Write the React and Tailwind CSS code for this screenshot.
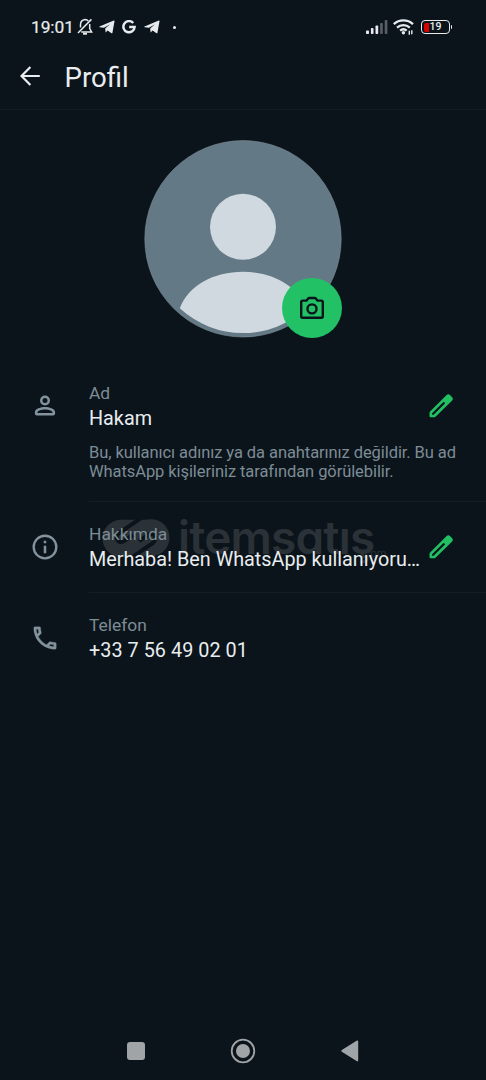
import * as React from "react";

const Svg = ({ children, className = "", ...props }) => (
  <svg viewBox="0 0 24 24" fill="currentColor" className={`block shrink-0 ${className}`} {...props}>
    {children}
  </svg>
);

const BellOffIcon = () => (
  <svg viewBox="0 0 16 18" fill="none" stroke="currentColor" strokeWidth="1.5" className="block h-[18px] w-4">
    <path d="M3.5 9.5V6.8C3.5 3.9 5.2 2 8 1.6c1.5 0 2.5.5 3.3 1.3M12.7 6v4.6l1.9 3.3H4.2" />
    <path d="M1 15 14.4 1.4" />
    <path d="M6 15.8h4" strokeWidth="1.8" />
  </svg>
);

const TelegramIcon = () => (
  <svg viewBox="0 0 16 14" fill="currentColor" className="block h-[14px] w-4">
    <path d="M.5 6.6 14.8.6c.5-.2.8.1.7.6l-2.1 11.7c-.1.5-.5.6-.9.3L8.6 10.5 6.6 12.4 6.2 8.4 11 4.2 5 7.8.6 7.2C.1 7.1.1 6.8.5 6.6Z" />
  </svg>
);

const GoogleIcon = () => (
  <svg viewBox="0 0 14 14" fill="none" stroke="currentColor" strokeWidth="2.5" className="block size-[14px]">
    <path d="M11.2 3A5.6 5.6 0 1 0 12.6 7H7.2" />
  </svg>
);

const SignalIcon = () => (
  <svg viewBox="0 0 22 14" fill="currentColor" className="block h-[14px] w-[22px]">
    <rect x="0" y="10.5" width="3" height="3.5" rx=".8" />
    <rect x="4.9" y="8" width="2.6" height="6" rx=".8" />
    <rect x="9.5" y="5.5" width="2.7" height="8.5" rx=".8" />
    <rect x="14.1" y="3" width="2.7" height="11" rx=".8" opacity=".35" />
    <rect x="18.7" y="0" width="2.7" height="14" rx=".8" opacity=".35" />
  </svg>
);

const WifiIcon = () => (
  <svg viewBox="0 0 21 16" fill="none" stroke="currentColor" strokeWidth="2.3" className="block h-4 w-[21px]">
    <path d="M.8 5.2C6.2.2 14.6.2 20 5.2M4 8.6c3.7-3.3 9.1-3.3 12.8 0M7.1 11.7c2-1.7 4.6-1.7 6.6 0" />
    <circle cx="10.4" cy="13.8" r="1.7" fill="currentColor" stroke="none" />
    <path d="M16.3 11.8v4M18.8 11.3v4" strokeWidth="1.4" />
  </svg>
);

const PersonIcon = () => (
  <Svg className="size-[30px]">
    <path d="M12 3.6a4 4 0 1 0 0 8 4 4 0 0 0 0-8Zm0 2a2 2 0 1 1 0 4 2 2 0 0 1 0-4ZM12 12.7c-3.2 0-8.1 1.2-8.1 4.2V18c0 .9.6 1.5 1.5 1.5h13.2c.9 0 1.5-.6 1.5-1.5v-1.1c0-3-4.9-4.2-8.100-4.200Zm0 2c2.600 0 6 1 6 2.300v.5H6V17c0-1.300 3.400-2.300 6-2.300Z" />
  </Svg>
);

const InfoIcon = () => (
  <Svg className="size-[30px]">
    <path d="M11 7h2v2h-2zm0 4h2v6h-2zm1-9a10 10 0 1 0 0 20 10 10 0 0 0 0-20Zm0 18.1a8.1 8.1 0 1 1 0-16.2 8.1 8.1 0 0 1 0 16.2Z" />
  </Svg>
);

const PhoneIcon = () => (
  <Svg className="size-[30px]" stroke="currentColor" strokeWidth=".2">
    <path d="M6.54 5c.06.89.21 1.76.45 2.59l-1.2 1.2c-.41-1.2-.67-2.47-.76-3.79h1.51m9.86 12.02c.85.24 1.72.39 2.6.45v1.49c-1.32-.09-2.59-.35-3.8-.75l1.2-1.19M7.5 3H4c-.55 0-1 .45-1 1 0 9.39 7.61 17 17 17 .55 0 1-.45 1-1v-3.490c0-.55-.45-1-1-1-1.240 0-2.450-.2-3.570-.57a1.020 1.020 0 0 0-1.020.24l-2.200 2.200a15.150 15.150 0 0 1-6.590-6.590l2.200-2.200c.28-.28.360-.67.250-1.020A11.360 11.360 0 0 1 8.500 4c0-.55-.45-1-1-1Z" />
  </Svg>
);

const PencilIcon = () => (
  <svg viewBox="0 0 24 24" fill="currentColor" className="block size-6 text-[#21c063]">
    <path
      fillRule="evenodd"
      d="M17.4 1.2a2.7 2.7 0 0 1 3.8 0l1.7 1.7a2.7 2.7 0 0 1 0 3.8L6.5 22.7c-.4.4-.8.6-1.4.6H1.9c-.8 0-1.4-.6-1.4-1.4v-3.1c0-.5.2-1 .6-1.4L17.4 1.2ZM3.1 19.300v1.500h1.500L16.200 9.200l-1.500-1.500L3.100 19.300Z"
    />
  </svg>
);

const CameraIcon = () => (
  <svg viewBox="0 0 26 24" fill="none" stroke="currentColor" strokeWidth="2.4" strokeLinejoin="round" className="block h-6 w-[26px]">
    <path d="M3.6 4.6h4L9.2 2.5c.3-.4.6-.5 1-.5h5.6c.4 0 .7.1 1 .5l1.6 2.1h4c.9 0 1.4.5 1.4 1.4v14.3c0 .9-.5 1.4-1.4 1.4H3.6c-.9 0-1.4-.5-1.4-1.4V6c0-.9.5-1.4 1.4-1.4Z" />
    <circle cx="13" cy="12.9" r="4.5" />
  </svg>
);

const StatusBar = () => (
  <div className="flex h-[52px] shrink-0 items-center justify-between pr-[34px] pl-[31px] text-[#e8ebed]">
    <div className="flex items-center pt-0.5">
      <span className="w-[46px] text-[17.4px] leading-5 tracking-[-0.1px] [-webkit-text-stroke:0.2px]">19:01</span>
      <BellOffIcon />
      <span className="ml-[6px]"><TelegramIcon /></span>
      <span className="ml-[7px]"><GoogleIcon /></span>
      <span className="ml-2"><TelegramIcon /></span>
      <span className="ml-[13px] size-[3px] rounded-full bg-current" />
    </div>
    <div className="flex items-center pt-0.5">
      <SignalIcon />
      <span className="ml-[5px]"><WifiIcon /></span>
      <div className="ml-[7px] flex h-[14px] w-[29px] items-center rounded-[4px] border-[1.5px] border-current pl-0.5">
        <span className="h-[9px] w-[5px] rounded-l-[2px] bg-[#d80000]" />
        <span className="ml-px text-[10.5px] leading-none font-medium">19</span>
      </div>
      <span className="ml-px h-1 w-[1.5px] rounded-r bg-current" />
    </div>
  </div>
);

const Header = () => (
  <header className="flex h-[58px] shrink-0 items-center border-b border-[#111c23] pb-[6px] pl-5 text-[#e9edef]">
    <svg viewBox="0 0 20 20" fill="none" stroke="currentColor" strokeWidth="2.2" className="mr-[24.5px] mb-[4px] block size-5">
      <path d="M19.8 10H1.8M10.4 1 1.5 10l8.9 9" />
    </svg>
    <h1 className="text-[27.6px] leading-8">Profil</h1>
  </header>
);

const Avatar = () => (
  <div className="relative mt-[30px] ml-[144px] size-[198px] shrink-0">
    <svg viewBox="0 0 198 198" className="block size-full">
      <circle cx="99" cy="98.8" r="98.2" fill="#637985" stroke="#82919a" strokeWidth=".6" />
      <circle cx="99" cy="86.8" r="33" fill="#d0d8e0" />
      <path d="M35.8 168.3C44.3 145.8 69.5 131.8 99 131.8s54.7 14 63.2 36.5a93 93 0 0 1-126.4 0Z" fill="#d0d8e0" />
    </svg>
    <button
      aria-label="Camera"
      className="absolute right-0 bottom-0 flex size-[60px] items-center justify-center rounded-full bg-[#22c165] text-[#0b141b]"
    >
      <CameraIcon />
    </button>
  </div>
);

const Row = ({ icon, label, value, valueClass = "", editable, children }) => (
  <div className="flex">
    <div className="flex h-[90px] w-[89px] shrink-0 items-center justify-center text-[#83939d]">{icon}</div>
    <div className="min-w-0 flex-1">
      <div className="flex h-[90px] items-center pr-[33px]">
        <div className="min-w-0 flex-1 whitespace-nowrap">
          <div className="text-[17.4px] leading-6 text-[#7d8c95]">{label}</div>
          <div className={`pt-px text-[19.8px] leading-[26px] text-[#e9edef] ${valueClass}`}>{value}</div>
        </div>
        {editable && <PencilIcon />}
      </div>
      {children}
    </div>
  </div>
);

const Watermark = () => (
  <div className="pointer-events-none absolute top-[519px] left-[102px] flex text-[#2a3137]">
    <svg viewBox="0 0 68 38" className="block h-[38px] w-[68px]">
      <g fill="currentColor">
        <circle cx="19" cy="19.300" r="18.500" />
        <circle cx="49" cy="18.700" r="18.500" />
        <path d="M19 .8h30v36.400H19Z" />
      </g>
      {/* diagonal cuts that split the two links */}
      <g fill="none" stroke="#0b141b" strokeWidth="4">
        <path d="M39-1 17 14c-5 4-1 12 5 8l9-6" />
        <path d="M29 39l22-15c5-4 1-12-5-8l-9 6" />
      </g>
    </svg>
    <div className="relative ml-[8px] h-10">
      <div className="mt-[-6px] font-[Inter] text-[46px] leading-[48px] font-semibold tracking-[-0.85px] [font-feature-settings:'cv11']">
        itemsatış
      </div>
      <div className="absolute top-[29px] right-[-12px] text-[11px] leading-3">.com</div>
    </div>
  </div>
);

const NavBar = () => (
  <nav className="mt-auto flex h-[59px] shrink-0 items-center justify-between px-[127px] text-[#a0a4a7]">
    <span className="size-[18px] rounded-[3px] bg-current" />
    <svg viewBox="0 0 26 26" className="block size-[26px]" fill="currentColor">
      <circle cx="13" cy="13" r="11.3" fill="none" stroke="currentColor" strokeWidth="1.8" />
      <circle cx="13" cy="13" r="7" />
    </svg>
    <svg viewBox="0 0 18 22" className="block h-[22px] w-[18px]" fill="currentColor">
      <path d="M.8 10 16 .6c.6-.4 1.2 0 1.2.7v19.3c0 .7-.6 1.1-1.2.7L.8 11.8c-.6-.4-.6-1.4 0-1.8Z" />
    </svg>
  </nav>
);

export default function App() {
  return (
    <div className="relative flex h-[1080px] w-[486px] flex-col overflow-hidden bg-[#0b141b] font-[Roboto,sans-serif]">
      <Watermark />
      <StatusBar />
      <Header />
      <Avatar />
      <main className="relative mt-[23px]">
        <Row icon={<PersonIcon />} label="Ad" value="Hakam" editable>
          <p className="mt-[-8px] h-[59px] border-b border-[#111e24] text-[16.5px] leading-[19px] tracking-[-0.08px] whitespace-nowrap text-[#7d8c95]">
            Bu, kullanıcı adınız ya da anahtarınız değildir. Bu ad
            <br />
            WhatsApp kişileriniz tarafından görülebilir.
          </p>
        </Row>
        <Row icon={<InfoIcon />} label="Hakkımda" value="Merhaba! Ben WhatsApp kullanıyoru…" editable>
          <div className="border-b border-[#111e24]" />
        </Row>
        <Row icon={<PhoneIcon />} label="Telefon" value="+33 7 56 49 02 01" valueClass="tracking-[0.05px]" />
      </main>
      <NavBar />
    </div>
  );
}
